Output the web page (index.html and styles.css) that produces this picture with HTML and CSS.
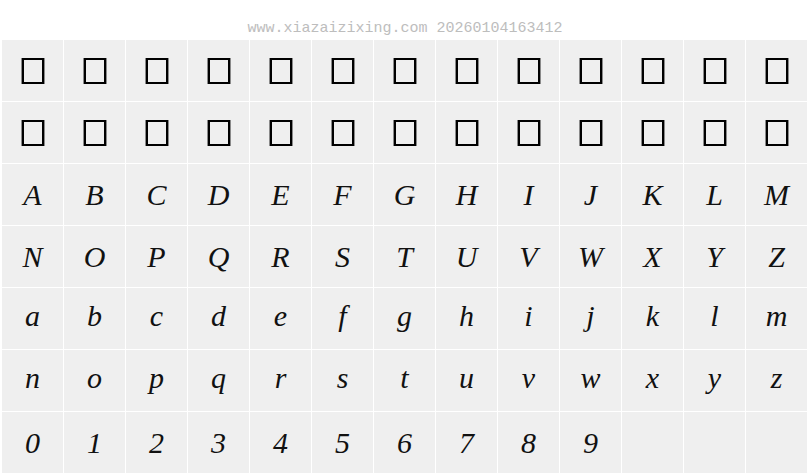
FILE: index.html
```html
<!DOCTYPE html>
<html>
<head>
<meta charset="utf-8">
<link rel="stylesheet" href="styles.css">
</head>
<body>
<div class="header">www.xiazaizixing.com 20260104163412</div>
<div class="grid">
  <div class="cell"><span class="tofu"></span></div>
  <div class="cell"><span class="tofu"></span></div>
  <div class="cell"><span class="tofu"></span></div>
  <div class="cell"><span class="tofu"></span></div>
  <div class="cell"><span class="tofu"></span></div>
  <div class="cell"><span class="tofu"></span></div>
  <div class="cell"><span class="tofu"></span></div>
  <div class="cell"><span class="tofu"></span></div>
  <div class="cell"><span class="tofu"></span></div>
  <div class="cell"><span class="tofu"></span></div>
  <div class="cell"><span class="tofu"></span></div>
  <div class="cell"><span class="tofu"></span></div>
  <div class="cell"><span class="tofu"></span></div>

  <div class="cell"><span class="tofu"></span></div>
  <div class="cell"><span class="tofu"></span></div>
  <div class="cell"><span class="tofu"></span></div>
  <div class="cell"><span class="tofu"></span></div>
  <div class="cell"><span class="tofu"></span></div>
  <div class="cell"><span class="tofu"></span></div>
  <div class="cell"><span class="tofu"></span></div>
  <div class="cell"><span class="tofu"></span></div>
  <div class="cell"><span class="tofu"></span></div>
  <div class="cell"><span class="tofu"></span></div>
  <div class="cell"><span class="tofu"></span></div>
  <div class="cell"><span class="tofu"></span></div>
  <div class="cell"><span class="tofu"></span></div>

  <div class="cell">A</div><div class="cell">B</div><div class="cell">C</div><div class="cell">D</div><div class="cell">E</div><div class="cell">F</div><div class="cell">G</div><div class="cell">H</div><div class="cell">I</div><div class="cell">J</div><div class="cell">K</div><div class="cell">L</div><div class="cell">M</div>

  <div class="cell">N</div><div class="cell">O</div><div class="cell">P</div><div class="cell">Q</div><div class="cell">R</div><div class="cell">S</div><div class="cell">T</div><div class="cell">U</div><div class="cell">V</div><div class="cell">W</div><div class="cell">X</div><div class="cell">Y</div><div class="cell">Z</div>

  <div class="cell lc">a</div><div class="cell lc">b</div><div class="cell lc">c</div><div class="cell lc">d</div><div class="cell lc">e</div><div class="cell lc">f</div><div class="cell lc">g</div><div class="cell lc">h</div><div class="cell lc">i</div><div class="cell lc">j</div><div class="cell lc">k</div><div class="cell lc">l</div><div class="cell lc">m</div>

  <div class="cell lc">n</div><div class="cell lc">o</div><div class="cell lc">p</div><div class="cell lc">q</div><div class="cell lc">r</div><div class="cell lc">s</div><div class="cell lc">t</div><div class="cell lc">u</div><div class="cell lc">v</div><div class="cell lc">w</div><div class="cell lc">x</div><div class="cell lc">y</div><div class="cell lc">z</div>

  <div class="cell">0</div><div class="cell">1</div><div class="cell">2</div><div class="cell">3</div><div class="cell">4</div><div class="cell">5</div><div class="cell">6</div><div class="cell">7</div><div class="cell">8</div><div class="cell">9</div><div class="cell"></div><div class="cell"></div><div class="cell"></div>
</div>
</body>
</html>
```

FILE: styles.css
```css
html, body {
  margin: 0;
  padding: 0;
  background: #ffffff;
}

.header {
  height: 40px;
  box-sizing: border-box;
  padding-top: 21px;
  text-align: center;
  font-family: "Liberation Mono", "DejaVu Sans Mono", monospace;
  font-size: 15px;
  line-height: 15px;
  color: #bdbdbd;
  padding-left: 2px;
}

.grid {
  display: grid;
  grid-template-columns: repeat(13, 61px);
  grid-auto-rows: 61px;
  gap: 1px;
  padding-left: 2px;
}

.cell {
  background: #efefef;
  display: flex;
  align-items: center;
  justify-content: center;
  font-family: "Liberation Serif", "Times New Roman", serif;
  font-style: italic;
  font-size: 30px;
  line-height: 1;
  color: #111111;
}

.cell.lc {
  padding-bottom: 6px;
  box-sizing: border-box;
}

.tofu {
  display: block;
  width: 18px;
  height: 22px;
  border: 2px solid #000000;
  box-shadow: -1px 0 0 #8a8a8a, 1px 0 0 #8a8a8a;
}
```
